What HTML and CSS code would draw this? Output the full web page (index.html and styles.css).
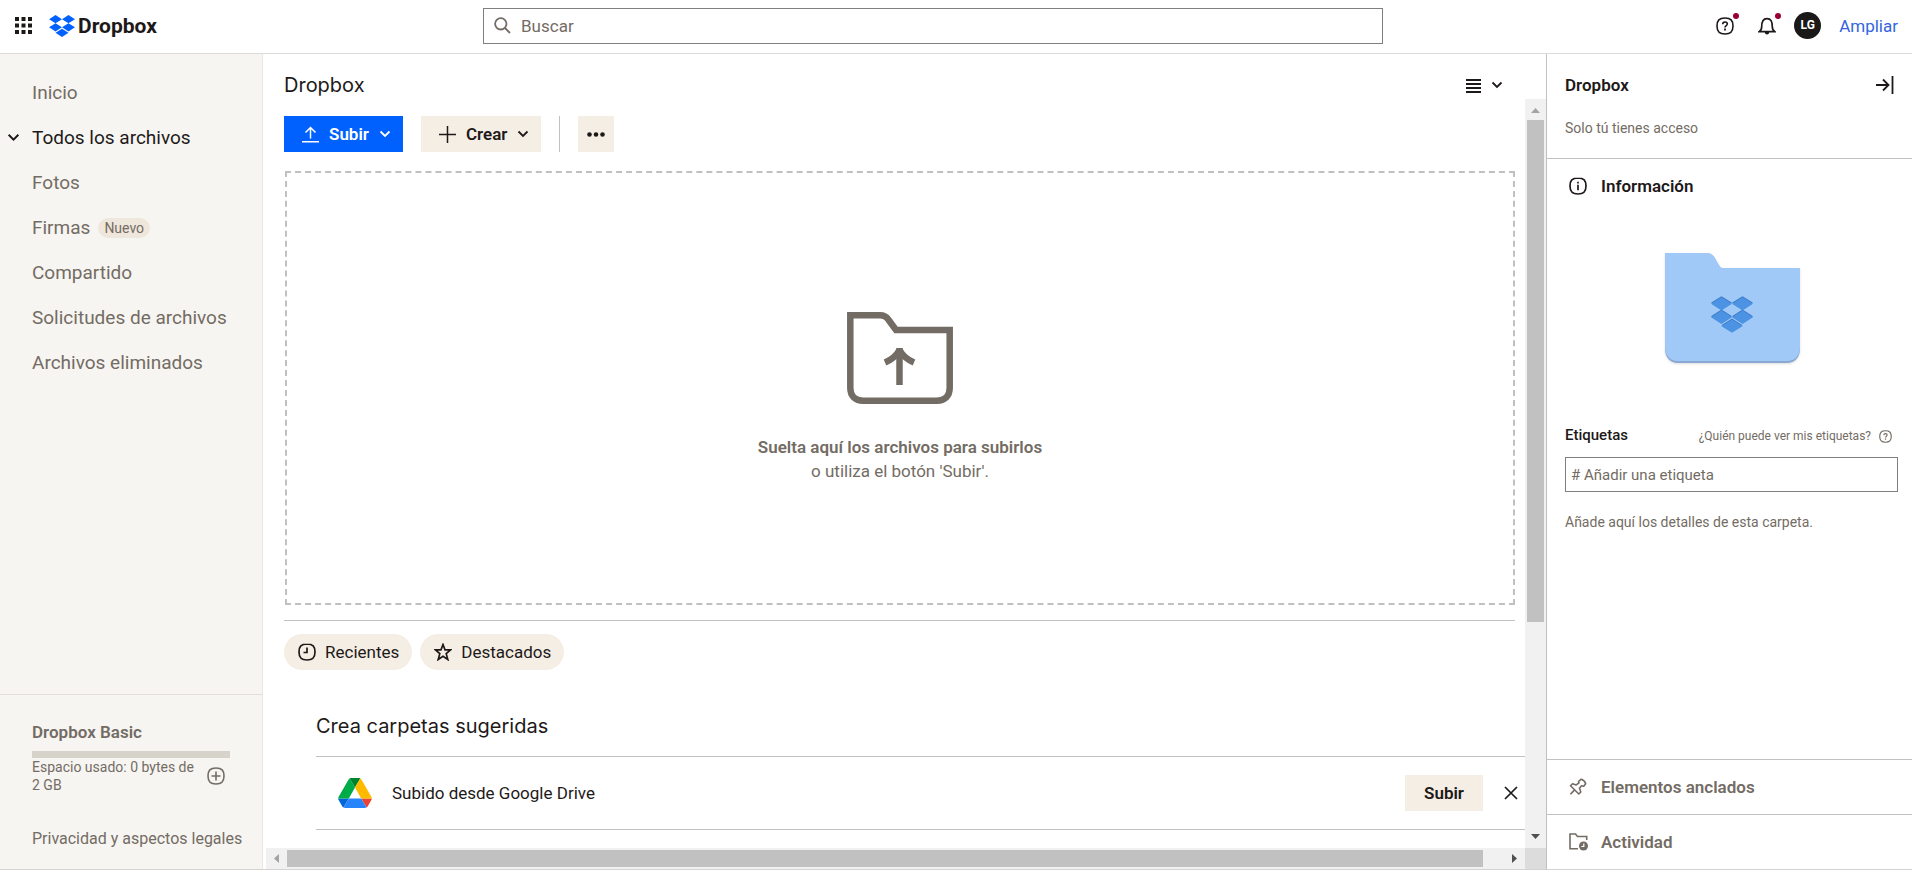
FILE: index.html
```html
<!DOCTYPE html>
<html lang="es">
<head>
<meta charset="utf-8">
<meta name="viewport" content="width=device-width, initial-scale=1">
<title>Dropbox</title>
<link rel="stylesheet" href="styles.css">
</head>
<body>
<svg class="defs" aria-hidden="true">
  <symbol id="chevron" viewBox="0 0 12 12"><path d="M1.500 3.500 6 8l4.500-4.500" fill="none" stroke="currentColor" stroke-width="1.800"/></symbol>
  <symbol id="dropbox" viewBox="0 1.800 24 20.400"><path fill="currentColor" d="M6 1.807 0 5.629l6 3.822 6-3.822zM18 1.807l-6 3.822 6 3.822 6-3.822zM0 13.274l6 3.822 6-3.822-6-3.822zM18 9.452l-6 3.822 6 3.822 6-3.822zM6 18.371l6 3.822 6-3.822-6-3.822z"/></symbol>
  <symbol id="help" viewBox="0 0 18 18"><path d="M9 1C3.200 1 1 3.200 1 9s2.200 8 8 8 8-2.200 8-8-2.200-8-8-8z" fill="none" stroke="currentColor" stroke-width="1.600"/><path d="M6.700 7.300C6.700 5.800 7.600 5 9 5s2.300.8 2.300 2c0 1.600-2.300 1.500-2.300 3.500" fill="none" stroke="currentColor" stroke-width="1.600"/><path d="M8.100 11.600h1.800v1.800H8.100z" fill="currentColor"/></symbol>
</svg>

<header class="topbar">
  <div class="brand">
    <button class="icon-btn" aria-label="Aplicaciones"><svg width="17" height="17" viewBox="0 0 17 17" fill="currentColor"><path d="M0 0h4v4H0zM6.500 0h4v4h-4zM13 0h4v4h-4zM0 6.500h4v4H0zM6.500 6.500h4v4h-4zM13 6.500h4v4h-4zM0 13h4v4H0zM6.500 13h4v4h-4zM13 13h4v4h-4z"/></svg></button>
    <a class="logo" href="#"><svg class="logo-mark" width="26" height="22"><use href="#dropbox"/></svg>Dropbox</a>
  </div>
  <label class="search">
    <svg width="17" height="17" viewBox="0 0 17 17" fill="none" stroke="currentColor" stroke-width="1.800"><circle cx="6.800" cy="6.800" r="5.700"/><path d="m11 11 5 5"/></svg>
    <input type="search" placeholder="Buscar" aria-label="Buscar">
  </label>
  <div class="account">
    <button class="icon-btn dotted" aria-label="Ayuda"><svg width="18" height="18"><use href="#help"/></svg></button>
    <button class="icon-btn dotted" aria-label="Notificaciones"><svg width="18" height="18" viewBox="0 0 18 18" fill="none" stroke="currentColor" stroke-width="1.700"><path d="M1.200 14.700h15.600c-1.800-1.200-2.500-2.700-2.500-5 0-5.500-1.500-8-5.300-8s-5.300 2.500-5.300 8c0 2.300-.7 3.800-2.500 5z"/><path d="M6.800 15h4.400c0 1.500-.7 2.500-2.200 2.500S6.800 16.500 6.800 15z" fill="currentColor" stroke="none"/></svg></button>
    <button class="avatar" aria-label="Cuenta">LG</button>
    <a class="upgrade" href="#">Ampliar</a>
  </div>
</header>

<div class="shell">
  <aside class="sidebar">
    <nav class="nav">
      <a href="#">Inicio</a>
      <a class="current" href="#"><svg class="nav-chevron" width="13" height="13"><use href="#chevron"/></svg>Todos los archivos</a>
      <a href="#">Fotos</a>
      <a href="#">Firmas <span class="badge">Nuevo</span></a>
      <a href="#">Compartido</a>
      <a href="#">Solicitudes de archivos</a>
      <a href="#">Archivos eliminados</a>
    </nav>
    <div class="plan">
      <strong class="plan-name">Dropbox Basic</strong>
      <div class="meter"></div>
      <div class="usage">
        <span>Espacio usado: 0 bytes de 2 GB</span>
        <button class="icon-btn" aria-label="Más espacio"><svg width="18" height="18" viewBox="0 0 18 18" fill="none" stroke="currentColor" stroke-width="1.600"><path d="M9 1C3.200 1 1 3.200 1 9s2.200 8 8 8 8-2.200 8-8-2.200-8-8-8zM9 4.500v9M4.500 9h9"/></svg></button>
      </div>
      <a class="legal" href="#">Privacidad y aspectos legales</a>
    </div>
  </aside>

  <main class="main">
    <div class="title-row">
      <h1>Dropbox</h1>
      <button class="view-btn" aria-label="Vista"><svg width="15" height="15" viewBox="0 0 15 15" stroke="currentColor" stroke-width="2"><path d="M0 2h15M0 6h15M0 10h15M0 14h15"/></svg><svg width="12" height="12"><use href="#chevron"/></svg></button>
    </div>
    <div class="scroller">
      <div class="content">
        <div class="toolbar">
          <button class="btn primary"><svg width="17" height="17" viewBox="0 0 17 17" fill="none" stroke="currentColor" stroke-width="1.500"><path d="M8.500 12.500V2M3.500 6.500l5-5 5 5M0 15.800h17"/></svg>Subir<svg width="12" height="12"><use href="#chevron"/></svg></button>
          <button class="btn"><svg width="17" height="17" viewBox="0 0 17 17" fill="none" stroke="currentColor" stroke-width="1.500"><path d="M8.500 0v17M0 8.500h17"/></svg>Crear<svg width="12" height="12"><use href="#chevron"/></svg></button>
          <span class="divider"></span>
          <button class="btn more" aria-label="Más"><svg width="18" height="5" viewBox="0 0 18 5" fill="currentColor"><circle cx="2.500" cy="2.500" r="2.300"/><circle cx="9" cy="2.500" r="2.300"/><circle cx="15.500" cy="2.500" r="2.300"/></svg></button>
        </div>
        <section class="dropzone">
          <svg width="106" height="92" viewBox="0 0 106 92" fill="none" stroke="currentColor" stroke-width="6.500"><path d="M3.300 3.300H33c4 0 6.500 1.500 8.500 4.500L49 18h53.700v58c0 8-5 12.700-12.700 12.700H16C8.300 88.700 3.300 84 3.300 76z"/><path d="M52.500 73V36"/><path d="M38 50.500c7-3 11.500-7 14.500-12.500 3 5.500 7.500 9.500 14.500 12.500" stroke-linejoin="bevel"/></svg>
          <p class="drop-text"><strong>Suelta aquí los archivos para subirlos</strong><br>o utiliza el botón 'Subir'.</p>
        </section>
        <div class="filters">
          <button class="pill"><svg width="18" height="18" viewBox="0 0 18 18" fill="none" stroke="currentColor" stroke-width="1.700"><path d="M9 1C3.200 1 1 3.200 1 9s2.200 8 8 8 8-2.200 8-8-2.200-8-8-8zM9 4.500v5H5.500"/></svg>Recientes</button>
          <button class="pill"><svg width="18" height="18" viewBox="0 0 18 18" fill="none" stroke="currentColor" stroke-width="1.700"><path d="m9 1.500 2 5.400h5.600l-4.400 3.700 1.600 5.900L9 13.200l-4.800 3.300 1.600-5.900L1.400 6.900H7z"/></svg>Destacados</button>
        </div>
        <section class="suggested">
          <h2>Crea carpetas sugeridas</h2>
          <div class="suggestion">
            <svg width="34" height="30" viewBox="0 0 87.300 78"><path fill="#0066da" d="m6.600 66.850 3.850 6.650c.8 1.400 1.950 2.500 3.300 3.300L27.500 53H0c0 1.550.4 3.100 1.200 4.500z"/><path fill="#00ac47" d="M43.650 25 29.900 1.200c-1.350.8-2.500 1.900-3.300 3.300l-25.400 44A9.060 9.060 0 0 0 0 53h27.500z"/><path fill="#ea4335" d="M73.550 76.800c1.350-.8 2.500-1.900 3.300-3.300l9.250-16c.8-1.400 1.200-2.950 1.200-4.500H59.800z"/><path fill="#00832d" d="M43.650 25 57.400 1.200C56.050.4 54.500 0 52.900 0H34.400c-1.600 0-3.150.45-4.500 1.200z"/><path fill="#2684fc" d="M59.800 53H27.500L13.750 76.800c1.350.8 2.900 1.200 4.500 1.200h50.800c1.600 0 3.150-.45 4.500-1.200z"/><path fill="#ffba00" d="m73.400 26.500-12.700-22c-.8-1.400-1.950-2.500-3.300-3.300L43.650 25 59.800 53h27.450c0-1.550-.4-3.100-1.200-4.500z"/></svg>
            <span class="suggestion-name">Subido desde Google Drive</span>
            <button class="btn">Subir</button>
            <button class="icon-btn close" aria-label="Descartar"><svg width="14" height="14" viewBox="0 0 14 14" stroke="currentColor" stroke-width="1.700"><path d="m1 1 12 12M13 1 1 13"/></svg></button>
          </div>
        </section>
      </div>
      <div class="track vertical">
        <svg class="arrow idle" viewBox="0 0 21 21"><path d="M6 14h9l-4.500-5z"/></svg>
        <div class="thumb"></div>
        <svg class="arrow" viewBox="0 0 21 21"><path d="M6 7h9l-4.500 5z"/></svg>
      </div>
      <div class="track horizontal">
        <svg class="arrow idle" viewBox="0 0 21 21"><path d="M13 6v9l-5-4.500z"/></svg>
        <div class="thumb"></div>
        <svg class="arrow" viewBox="0 0 21 21"><path d="M8 6v9l5-4.500z"/></svg>
      </div>
      <div class="corner"></div>
    </div>
  </main>

  <aside class="details">
    <header class="details-head">
      <div class="details-title"><h2>Dropbox</h2><button class="icon-btn" aria-label="Contraer panel"><svg width="18" height="18" viewBox="0 0 18 18" fill="none" stroke="currentColor" stroke-width="1.800"><path d="M0 9h12M7 3.500 12.500 9 7 14.500M16.500 0v18"/></svg></button></div>
      <p>Solo tú tienes acceso</p>
    </header>
    <section class="info">
      <h3><svg width="18" height="18" viewBox="0 0 18 18" fill="none" stroke="currentColor" stroke-width="1.700"><path d="M9 1C3.200 1 1 3.200 1 9s2.200 8 8 8 8-2.200 8-8-2.200-8-8-8z"/><path d="M9 7.800v5.400M9 4.800v1.700"/></svg>Información</h3>
      <svg class="folder" width="142" height="120" viewBox="0 0 142 120">
        <path d="M4 5h42c4 0 6 1.500 8 5l4 7c1.200 2 2 3 4 3h77v80c0 8-5 14-13 14H17c-8 0-13-6-13-14z" fill="#89a9d2"/>
        <path d="M4 4h42c4 0 6 1.500 8 5l4 7c1.200 2 2 3 4 3h77v79c0 8-5 14-13 14H17c-8 0-13-6-13-14z" fill="#a1c9f7"/>
        <svg class="mark-shade" x="50" y="47" width="42" height="36"><use href="#dropbox"/></svg>
        <svg class="mark" x="50" y="48" width="42" height="36"><use href="#dropbox"/></svg>
      </svg>
      <div class="tags-head"><label for="tag">Etiquetas</label><a href="#">¿Quién puede ver mis etiquetas?<svg width="13" height="13"><use href="#help"/></svg></a></div>
      <input class="tag-input" id="tag" type="text" placeholder="# Añadir una etiqueta">
      <p class="hint">Añade aquí los detalles de esta carpeta.</p>
    </section>
    <button class="fold"><svg width="19" height="18" viewBox="0 0 19 18" fill="none" stroke="currentColor" stroke-width="1.600" stroke-linejoin="round"><path d="m9.500 3.500 2.700-2.300c2.300.7 3.900 2.200 4.500 4.500l-2 2.500-2.200-.5-2 2.600 1.300 3.700-2 2L1.500 7.700l2-2 3.700 1.200 2.800-2zM5.600 11.900l-4.200 4.300"/></svg>Elementos anclados</button>
    <button class="fold"><svg width="19" height="18" viewBox="0 0 19 18" fill="none" stroke="currentColor" stroke-width="1.600"><path d="M9 15.800H1V1h5.500l2 2.500h9.200V7"/><circle cx="14.500" cy="13" r="4.500" fill="currentColor" stroke="none"/><path d="M14.800 10.500v3h-2.500" stroke="#fff" stroke-width="1.200"/></svg>Actividad</button>
  </aside>
</div>
</body>
</html>
```
FILE: styles.css
```css
:root {
  --ink: #1e1919;
  --muted: #736c64;
  --line: #c3c1be;
  --soft: #f5eee5;
}
* { box-sizing: border-box; margin: 0; padding: 0; }
body {
  height: 100vh;
  display: flex;
  flex-direction: column;
  padding-bottom: 5px;
  background: #fff;
  color: var(--ink);
  font: 17px/24px Roboto, "Liberation Sans", sans-serif;
  overflow: hidden;
}
button, input { font: inherit; color: inherit; border: 0; background: none; }
a { color: inherit; text-decoration: none; }
svg { flex: none; display: block; }
.defs { position: absolute; width: 0; height: 0; }
.icon-btn { display: flex; }

.topbar {
  flex: none;
  height: 54px;
  display: flex;
  align-items: center;
  padding: 0 14px 2px 0;
  border-bottom: 1px solid #dcdad8;
}
.brand { flex: 0 0 483px; display: flex; align-items: center; gap: 17px; padding-left: 15px; }
.logo { display: flex; align-items: center; gap: 3px; font-size: 21px; font-weight: 700; }
.logo-mark { color: #0061fe; }
.search {
  flex: 0 1 900px;
  height: 36px;
  display: flex;
  align-items: center;
  gap: 10px;
  padding: 0 10px;
  border: 1px solid #807f7d;
  color: var(--muted);
}
.search input { flex: 1; outline: 0; }
::placeholder { color: var(--muted); opacity: 1; }
.account { display: flex; align-items: center; gap: 18px; margin-left: auto; }
.dotted { position: relative; }
.dotted:first-child { margin-right: 6px; }
.dotted::after {
  content: "";
  position: absolute;
  top: -4px;
  right: -5px;
  width: 6px;
  height: 6px;
  border-radius: 50%;
  background: #9b0032;
}
.avatar {
  width: 27px;
  height: 27px;
  border-radius: 50%;
  background: #1a1918;
  color: #fff;
  font-size: 12px;
  font-weight: 700;
  line-height: 27px;
}
.upgrade { color: #3464e0; }

.shell { flex: 1; min-height: 0; display: flex; border-bottom: 1px solid #d5d3d1; }

.sidebar {
  flex: 0 0 263px;
  display: flex;
  flex-direction: column;
  justify-content: space-between;
  background: #f7f5f2;
  border-right: 1px solid #eae7e2;
  color: var(--muted);
}
.nav { display: flex; flex-direction: column; padding-top: 16px; font-size: 19px; }
.nav a { height: 45px; display: flex; align-items: center; gap: 8px; padding-left: 32px; position: relative; }
.nav .current { color: var(--ink); }
.nav-chevron { position: absolute; left: 7px; }
.badge { padding: 0 6px; border-radius: 10px; background: #f0e7dc; font-size: 14px; line-height: 20px; }
.plan { display: flex; flex-direction: column; padding: 25px 12px 18px 32px; border-top: 1px solid #e2dfda; }
.plan-name { font-size: 17px; font-weight: 600; }
.meter { height: 7px; margin: 7px 20px 0 0; background: #d8d3ca; }
.usage { display: flex; align-items: center; gap: 4px; margin-right: 25px; font-size: 14px; line-height: 18px; }
.usage span { flex: 1; }
.legal { margin-top: 33px; font-size: 16px; white-space: nowrap; }

.main { flex: 1; min-width: 0; display: flex; flex-direction: column; }
.title-row { display: flex; align-items: center; justify-content: space-between; height: 45px; padding: 17px 43px 0 21px; }
h1, .suggested h2 { font: 400 20px/28px Inter, sans-serif; }
.view-btn { display: flex; align-items: center; gap: 10px; }
.scroller { flex: 1; min-height: 0; display: grid; grid-template: minmax(0, 1fr) 21px / minmax(0, 1fr) 21px; }
.content { padding: 17px 10px 0 21px; overflow: hidden; }
.toolbar { display: flex; gap: 18px; }
.btn {
  height: 36px;
  display: flex;
  align-items: center;
  gap: 10px;
  padding: 0 12px 0 18px;
  background: var(--soft);
  font-weight: 600;
}
.btn.primary { background: #0061fe; color: #fff; }
.btn.more { padding: 0 9px; }
.divider { width: 1px; background: #c4c0ba; }
.dropzone {
  height: 434px;
  display: flex;
  flex-direction: column;
  align-items: center;
  justify-content: center;
  gap: 31px;
  margin: 19px 0 0 1px;
  padding-top: 19px;
  border: 2px dashed #c2c0be;
  color: var(--muted);
}
.drop-text { text-align: center; }
strong { font-weight: 600; }
.filters { display: flex; gap: 8px; margin-top: 15px; padding-top: 13px; border-top: 1px solid var(--line); }
.pill { height: 36px; display: flex; align-items: center; gap: 9px; padding: 0 13px 0 14px; border-radius: 18px; background: var(--soft); }
.suggested { margin: 42px -10px 0 32px; }
.suggestion {
  height: 74px;
  display: flex;
  align-items: center;
  margin-top: 16px;
  padding: 0 7px 0 22px;
  border: solid var(--line);
  border-width: 1px 0;
}
.suggestion-name { flex: 1; padding-left: 20px; }
.suggestion .btn { padding: 0 19px; }
.close { margin-left: 21px; }

.track { display: flex; align-items: stretch; background: #f1f1f1; }
.track .thumb { background: #c1c1c1; }
.arrow { width: 21px; height: 21px; fill: #505050; }
.arrow.idle { fill: #a3a3a3; }
.vertical { flex-direction: column; }
.vertical .thumb { height: 67%; margin: 0 2px auto; }
.horizontal { margin-left: 3px; }
.horizontal .thumb { width: 95%; margin: 2px auto 2px 0; }
.corner { background: #dcdcdc; }

.details { flex: 0 0 366px; display: flex; flex-direction: column; border-left: 1px solid var(--line); color: var(--muted); }
.details-head { padding: 19px 18px 18px; border-bottom: 1px solid var(--line); }
.details-title { display: flex; justify-content: space-between; align-items: center; color: var(--ink); }
.details h2, .details h3 { font-size: 17px; font-weight: 600; line-height: 24px; }
.details-head p { margin-top: 19px; font-size: 14px; }
.info { flex: 1; display: flex; flex-direction: column; padding: 15px 14px 0 18px; }
.info h3 { display: flex; align-items: center; gap: 14px; padding-left: 4px; color: var(--ink); }
.folder { align-self: center; margin: 51px 0 54px; filter: drop-shadow(0 1px 1px #0002); }
.mark { color: #4c93e4; }
.mark-shade { color: #3b78c4; }
.tags-head { display: flex; align-items: baseline; justify-content: space-between; padding-right: 6px; font-size: 15px; }
.tags-head label { color: var(--ink); font-weight: 500; }
.tags-head a { display: flex; align-items: center; gap: 8px; font-size: 12px; }
.tag-input { height: 35px; margin-top: 9px; padding: 0 5px; border: 1px solid #807f7d; font-size: 15px; }
.hint { margin-top: 18px; font-size: 14px; }
.fold { height: 55px; display: flex; align-items: center; gap: 13px; padding-left: 22px; border-top: 1px solid var(--line); font-weight: 600; }
```
